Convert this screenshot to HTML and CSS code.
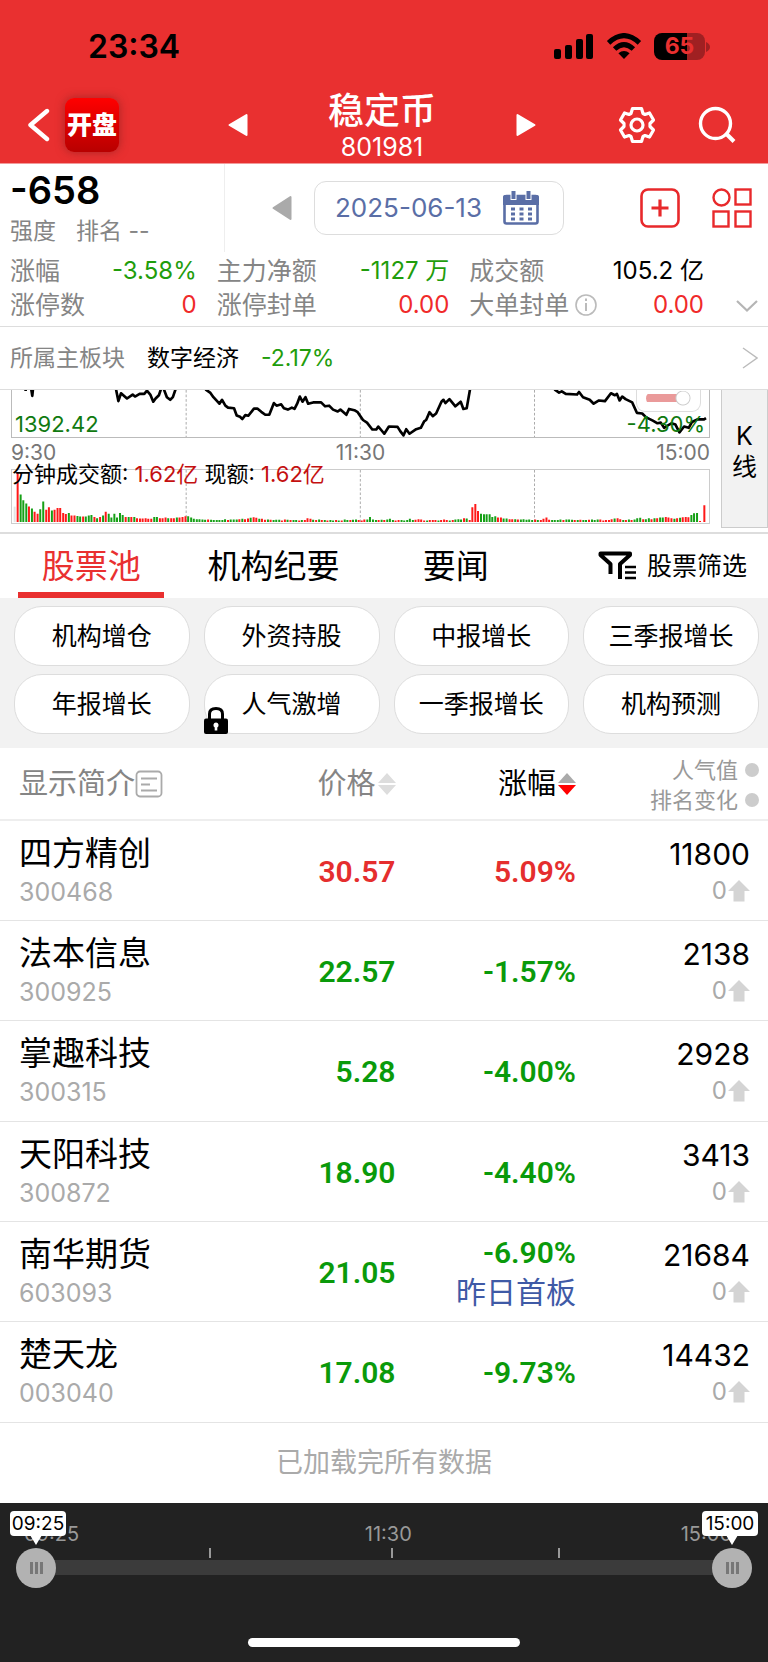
FILE: index.html
```html
<!DOCTYPE html>
<html lang="zh-CN">
<head>
<meta charset="utf-8">
<meta name="viewport" content="width=device-width, initial-scale=1">
<title>稳定币 801981</title>
<link rel="stylesheet" href="styles.css">
</head>
<body>
<header class="top">
  <div class="status">
    <span class="clock">23:34</span>
    <div class="status-icons">
      <svg width="40" height="27" viewBox="0 0 40 27" aria-hidden="true"><rect x="0" y="16" width="7" height="10" rx="2"/><rect x="11" y="12" width="7" height="14" rx="2"/><rect x="22" y="6" width="7" height="20" rx="2"/><rect x="32" y="1" width="7" height="25" rx="2"/></svg>
      <svg width="36" height="27" viewBox="0 0 36 27" aria-hidden="true"><g fill="none" stroke="#000" stroke-width="5"><path d="M2.6 9.8Q18 -4.600 33.400 9.800"/><path d="M8.600 16Q18 7.200 27.400 16"/></g><path d="M18 26L12.400 20.300Q18 15.600 23.600 20.300Z"/></svg>
      <div class="battery"><span class="battery-body">65</span><svg width="4" height="10" viewBox="0 0 4 10" aria-hidden="true"><path d="M0 0Q4 2 4 5T0 10Z" fill="#a02022"/></svg></div>
    </div>
  </div>
  <nav class="nav">
    <div class="nav-left">
      <button class="icon-btn" aria-label="返回"><svg width="22" height="34" viewBox="0 0 22 34"><path d="M19 3L2.500 17L19 31" fill="none" stroke="#fff" stroke-width="4.400" stroke-linecap="round" stroke-linejoin="round"/></svg></button>
      <a class="logo" href="#">开盘</a>
    </div>
    <div class="nav-title">
      <button class="icon-btn" aria-label="上一个"><svg width="20" height="24" viewBox="0 0 20 24"><path d="M1.500 12L18.500 2V22Z" fill="#fff" stroke="#fff" stroke-width="2" stroke-linejoin="round"/></svg></button>
      <div class="title-text"><h1>稳定币</h1><span>801981</span></div>
      <button class="icon-btn" aria-label="下一个"><svg width="20" height="24" viewBox="0 0 20 24"><path d="M18.500 12L1.500 2V22Z" fill="#fff" stroke="#fff" stroke-width="2" stroke-linejoin="round"/></svg></button>
    </div>
    <div class="nav-right">
      <button class="icon-btn" aria-label="设置"><svg width="38" height="38" viewBox="0 0 38 38" fill="none" stroke="#fff" stroke-width="3.200" stroke-linejoin="round"><path d="M14.500 2.500H23.500L25 7.500L27 8.500L31.500 7L35.500 14L32 17.500V20.500L35.500 24L31.500 31L27 29.500L25 30.500L23.500 35.500H14.500L13 30.500L11 29.500L6.500 31L2.500 24L6 20.500V17.500L2.500 14L6.500 7L11 8.500L13 7.500Z"/><circle cx="19" cy="19" r="6"/></svg></button>
      <button class="icon-btn" aria-label="搜索"><svg width="38" height="38" viewBox="0 0 38 38" fill="none" stroke="#fff" stroke-width="3.400"><circle cx="17.500" cy="17.500" r="15"/><path d="M27.500 27L36 35.500" stroke-width="4"/></svg></button>
    </div>
  </nav>
</header>

<main>
  <section class="summary">
    <div class="strength">
      <strong>-658</strong>
      <p><span>强度</span><span>排名 --</span></p>
    </div>
    <div class="date-row">
      <button class="icon-btn" aria-label="前一天"><svg width="20" height="26" viewBox="0 0 20 26"><path d="M1.500 13L18.500 2V24Z" fill="#aaa" stroke="#aaa" stroke-width="2" stroke-linejoin="round"/></svg></button>
      <button class="date-btn">2025-06-13
        <svg width="36" height="34" viewBox="0 0 36 34" aria-hidden="true"><rect x="1.500" y="5" width="33" height="27.500" rx="2" fill="#fff" stroke="#5a6ea6" stroke-width="2.600"/><path d="M0 14V6Q0 4 2 4H34Q36 4 36 6V14Z" fill="#5a6ea6"/><g stroke="#fff" stroke-width="6"><path d="M10.500 0V9M25.500 0V9"/></g><g stroke="#5a6ea6" stroke-width="4"><path d="M10.500 0V8M25.500 0V8"/><path d="M8 18H29M8 23H29M8 28H29" stroke-width="3" stroke-dasharray="4 4.500"/></g></svg>
      </button>
      <div class="actions">
        <button class="icon-btn" aria-label="添加"><svg width="40" height="40" viewBox="0 0 40 40" fill="none" stroke="#e8292b"><rect x="1.500" y="1.500" width="37" height="37" rx="6.500" stroke-width="2.600"/><path d="M11.500 20H28.500M20 11.500V28.500" stroke-width="3.200"/></svg></button>
        <button class="icon-btn" aria-label="分类"><svg width="40" height="40" viewBox="0 0 40 40" fill="none" stroke="#e8292b" stroke-width="2.400"><circle cx="9.500" cy="9.500" r="8"/><rect x="23.500" y="1.500" width="15" height="15"/><rect x="1.500" y="23.500" width="15" height="15"/><rect x="23.500" y="23.500" width="15" height="15"/></svg></button>
      </div>
    </div>
  </section>

  <section class="stats">
    <dl>
      <div><dt>涨幅</dt><dd class="down">-3.58%</dd></div>
      <div><dt>主力净额</dt><dd class="down">-1127 万</dd></div>
      <div><dt>成交额</dt><dd>105.2 亿</dd></div>
      <div><dt>涨停数</dt><dd class="up">0</dd></div>
      <div><dt>涨停封单</dt><dd class="up">0.00</dd></div>
      <div><dt>大单封单<svg width="24" height="24" viewBox="0 0 24 24" fill="none" stroke="#bbb" aria-hidden="true"><circle cx="12" cy="12" r="10" stroke-width="1.600"/><path d="M12 10V18M12 5.500V8" stroke-width="2"/></svg></dt><dd class="up">0.00</dd></div>
    </dl>
    <button class="icon-btn" aria-label="展开"><svg width="22" height="34" viewBox="0 0 22 34"><path d="M1 13L11 22.500L21 13" fill="none" stroke="#b5b5b5" stroke-width="2.200"/></svg></button>
  </section>

  <a class="sector" href="#">
    <span class="muted">所属主板块</span><span>数字经济</span><span class="down">-2.17%</span>
    <svg width="16" height="22" viewBox="0 0 16 22" aria-hidden="true"><path d="M1 1L15 11L1 21" fill="none" stroke="#bbb" stroke-width="1.400"/></svg>
  </a>

  <section class="charts">
    <div class="chart-col">
      <div class="price">
        <svg class="plot" viewBox="34 28 2097 144" preserveAspectRatio="none" aria-hidden="true">
          <g class="grid"><path d="M558 28V172M1082 28V172M1606 28V172"/></g>
          <g class="line">
            <path d="M75 25V31M92 26L95 46L97 26"/>
            <path d="M347 26L354 62L362 38L380 54L397 42L404 48L418 40L432 40L440 30L450 42L459 64L466 54L476 44L482 26"/>
            <path d="M491 26L500 50L510 58L518 50L526 26"/>
            <path d="M616 26L630 36L640 50L658 70L666 58L676 76L684 82L702 84L710 106L720 110L727 117L736 105L745 107L762 85L772 85L784 95L796 104L808 104L822 68L830 76L844 72L852 84L864 88L876 82L884 86L892 70L900 48L908 64L917 50L925 70L940 66L964 66L976 78L988 76L1000 88L1014 94L1022 88L1040 104L1048 86L1064 90L1074 96L1090 120L1102 128L1118 149L1130 149L1136 140L1146 152L1154 162L1168 140L1194 141L1202 154L1212 167L1220 148L1230 162L1250 148L1264 144L1274 124L1280 120L1290 96L1300 108L1310 100L1326 64L1332 58L1338 68L1350 56L1368 78L1384 64L1392 86L1402 84L1412 26"/>
            <path d="M1666 26L1680 36L1688 32L1700 40L1734 42L1740 34L1752 50L1772 58L1784 70L1800 60L1818 62L1836 38L1848 44L1854 40L1862 60L1870 48L1880 56L1900 66L1914 98L1930 100L1942 112L1962 122L1976 130L1986 128L1996 144L2008 136L2018 130L2030 134L2042 158L2056 140L2070 144L2080 126L2096 118L2116 118L2122 114"/>
          </g>
        </svg>
        <span class="low">1392.42</span><span class="low low-pct">-4.30%</span>
        <label class="toggle"><input type="checkbox" checked aria-label="叠加"></label>
      </div>
      <div class="axis"><span>9:30</span><span>11:30</span><span>15:00</span></div>
      <div class="volume">
        <svg class="plot" viewBox="34 266 2097 165" preserveAspectRatio="none" aria-hidden="true">
          <g class="grid"><path d="M558 266V431M1082 266V431M1606 266V431"/></g>
          <path d="M42 428V380" stroke="#e4e4e4" stroke-width="6"/>
          <path id="vol-up" stroke="#ff1818" stroke-width="6"/>
          <path id="vol-down" stroke="#16a016" stroke-width="6"/>
        </svg>
        <p class="legend">分钟成交额: <b>1.62亿</b> 现额: <b>1.62亿</b></p>
      </div>
    </div>
    <button class="kline">K<br>线</button>
  </section>

  <nav class="tabs">
    <button class="tab active">股票池</button>
    <button class="tab">机构纪要</button>
    <button class="tab">要闻</button>
    <button class="filter"><svg width="38" height="30" viewBox="0 0 38 30" fill="none" stroke="#000" aria-hidden="true"><path d="M12.500 23V13L2.500 4V2.500H32V4L22 13V28" stroke-width="4" stroke-linejoin="round"/><path d="M27 16H38M27 21.500H38M27 27H38" stroke-width="2.600"/></svg>股票筛选</button>
  </nav>

  <section class="chips">
    <button>机构增仓</button><button>外资持股</button><button>中报增长</button><button>三季报增长</button>
    <button>年报增长</button><button>人气激增<svg class="lock" width="24" height="27" viewBox="0 0 24 27" aria-hidden="true"><path d="M5.500 13V7Q5.500 1.500 12 1.500T18.500 7V13" fill="none" stroke="#000" stroke-width="3"/><rect y="11.500" width="24" height="15.500" rx="2"/><path d="M12 15.500a2.700 2.700 0 0 1 1.300 5V23.500H10.700V20.500A2.700 2.700 0 0 1 12 15.500Z" fill="#fff"/></svg></button><button>一季报增长</button><button>机构预测</button>
  </section>

  <table class="stocks">
    <colgroup><col class="c-name"><col class="c-price"><col class="c-pct"><col></colgroup>
    <thead>
      <tr>
        <th><button class="head-btn">显示简介<svg width="28" height="28" viewBox="0 0 28 28" fill="none" stroke="#aaa" aria-hidden="true"><rect x="1.500" y="1.500" width="25" height="25" rx="3.500" stroke-width="1.800"/><path d="M6 8.500H22M6 14.500H15M6 20.500H22" stroke-width="1.800"/></svg></button></th>
        <th><button class="head-btn">价格<svg width="18" height="22" viewBox="0 0 18 22" aria-hidden="true"><path d="M9 0L18 10H0ZM9 22L18 12H0Z" fill="#ddd"/></svg></button></th>
        <th><button class="head-btn sorted">涨幅<svg width="18" height="22" viewBox="0 0 18 22" aria-hidden="true"><path d="M9 0L18 10H0Z" fill="#aaa"/><path d="M9 22L18 12H0Z" fill="#f00"/></svg></button></th>
        <th class="pop-head"><button>人气值<i></i></button><button>排名变化<i></i></button></th>
      </tr>
    </thead>
    <tbody id="rows"></tbody>
  </table>
  <p class="end">已加载完所有数据</p>
</main>

<footer class="timeline">
  <div class="marks"><span>09:25</span><span>11:30</span><span>15:00</span></div>
  <div class="ticks"><i></i><i></i><i></i></div>
  <div class="range">
    <input type="range" min="0" max="240" value="0" aria-label="开始时间">
    <input type="range" min="0" max="240" value="240" aria-label="结束时间">
  </div>
  <output class="tip tip-start">09:25</output>
  <output class="tip tip-end">15:00</output>
  <div class="home"></div>
</footer>
<script src="main.js"></script>
</body>
</html>
```
FILE: styles.css
```css
* { box-sizing: border-box; }
body {
  margin: 0;
  background: #fff;
  color: #000;
  font-family: Inter, "Noto Sans CJK SC", sans-serif;
  font-size: 24px;
  line-height: 34px;
}
h1, p, dl, dd { margin: 0; }
button {
  font: inherit;
  color: inherit;
  background: none;
  border: 0;
  padding: 0;
  cursor: pointer;
}
a { color: inherit; text-decoration: none; }
svg { display: block; flex: none; }
.icon-btn { display: flex; }
.muted { color: #858585; }
.up { color: #f02a2a; }
.down { color: #1f9d0c; }

/* header */
.top { background: #e93030; border-bottom: 1px solid #f29a9a; }
.status {
  display: flex;
  align-items: center;
  justify-content: space-between;
  height: 87px;
  padding: 6px 58px 0 88px;
}
.clock { font-size: 32px; font-weight: 600; }
.status-icons { display: flex; align-items: center; gap: 12px; }
.battery { display: flex; align-items: center; gap: 1px; }
.battery-body {
  width: 51px;
  height: 27px;
  border-radius: 8px;
  background: linear-gradient(90deg, #000 65%, #a02022 65%);
  color: #e93030;
  font-size: 23px;
  font-weight: 700;
  line-height: 27px;
  text-align: center;
}
.nav { display: flex; align-items: center; height: 76px; color: #fff; }
.nav-left { display: flex; flex: 1; align-items: center; gap: 15px; padding-left: 28px; }
.logo {
  width: 54px;
  height: 54px;
  border-radius: 9px;
  background: linear-gradient(#f00, #b80000);
  box-shadow: 0 0 10px rgba(120, 30, 30, .6);
  font-size: 25px;
  font-weight: 900;
  line-height: 54px;
  text-align: center;
}
.nav-title { display: flex; width: 40%; align-items: center; justify-content: space-between; }
.title-text { display: flex; flex-direction: column; align-items: center; gap: 4px; font-size: 25px; line-height: 24px; }
.title-text h1 { font-size: 36px; font-weight: 500; line-height: 40px; }
.nav-right { display: flex; flex: 1; justify-content: flex-end; gap: 42px; padding-right: 32px; }

/* summary */
.summary { display: flex; height: 88px; }
.strength { width: 225px; padding: 8px 0 0 10px; border-right: 1px solid #eee; }
.strength strong { display: block; font-size: 38px; font-weight: 600; line-height: 36px; }
.strength p { display: flex; gap: 20px; margin-top: 6px; color: #858585; font-size: 23px; }
.date-row { display: flex; flex: 1; align-items: center; gap: 22px; padding: 0 16px 0 47px; }
.date-btn {
  display: flex;
  align-items: center;
  justify-content: space-between;
  width: 250px;
  height: 54px;
  padding: 0 24px 0 20px;
  border: 1px solid #ddd;
  border-radius: 12px;
  color: #5a6ea6;
  font-size: 26px;
}
.actions { display: flex; flex: 1; justify-content: flex-end; gap: 32px; }
.stats {
  display: flex;
  align-items: flex-end;
  gap: 32px;
  padding: 2px 10px 4px;
  border-bottom: 1px solid #ddd;
}
.stats dl { display: grid; flex: 1; grid-template-columns: 187fr 233fr 235fr; column-gap: 20px; }
.stats dl div { display: flex; justify-content: space-between; }
.stats dt { display: flex; align-items: center; gap: 5px; color: #858585; font-size: 25px; }
.sector {
  display: flex;
  align-items: center;
  gap: 22px;
  height: 62px;
  padding: 0 10px;
  font-size: 23px;
}
.sector svg { margin-left: auto; }

/* charts */
.charts {
  display: flex;
  gap: 11px;
  padding-left: 11px;
  border-top: 1px solid #ddd;
  border-bottom: 2px solid #ddd;
}
.chart-col { flex: 1; padding-bottom: 8px; }
.plot { width: 100%; height: 100%; }
.grid { fill: none; stroke: #aaa; stroke-width: 3; stroke-dasharray: 8 6; }
.line { fill: none; stroke: #000; stroke-width: 8; stroke-linejoin: round; }
.price { position: relative; height: 48px; border: solid #bbb; border-width: 0 1px 1px; }
.low { position: absolute; bottom: 0; left: 3px; color: #107a10; font-size: 22px; line-height: 26px; }
.low-pct { right: 4px; left: auto; }
.toggle {
  position: absolute;
  top: 0;
  right: 8px;
  display: flex;
  padding: 1px 9px 5px;
  border: solid #ddd;
  border-width: 0 1px 1px;
  border-radius: 0 0 9px 9px;
  background: rgba(255, 255, 255, .7);
}
.toggle input {
  appearance: none;
  width: 45px;
  height: 15px;
  margin: 0;
  background:
    radial-gradient(circle at 37px 7px, #fff 6px, #ccc 7px, transparent 8px),
    linear-gradient(#ea9a9a, #ea9a9a) 0 3px / 38px 8px no-repeat;
  border-radius: 8px;
}
.axis { display: grid; grid-template-columns: 1fr auto 1fr; height: 31px; color: #777; font-size: 21px; line-height: 30px; }
.axis span:last-child { text-align: right; }
.volume { position: relative; height: 55px; border: 1px solid #ccc; }
.legend { position: absolute; top: -11px; left: 0; font-size: 22px; line-height: 30px; white-space: nowrap; }
.legend b { color: #c41010; font-weight: 400; }
.kline {
  width: 47px;
  margin-bottom: 4px;
  padding-bottom: 14px;
  background: #f2f2f2;
  border: 1px solid #ccc;
  border-top: 0;
  font-size: 25px;
  line-height: 31px;
}

/* tabs */
.tabs { display: flex; height: 64px; padding-right: 21px; }
.tab { position: relative; flex: 1; font-size: 33px; }
.tab.active { color: #e93030; }
.tab.active::after {
  content: "";
  position: absolute;
  right: 18px;
  bottom: 0;
  left: 18px;
  height: 6px;
  background: #e93030;
}
.filter { display: flex; flex: 0 0 200px; align-items: center; justify-content: flex-end; gap: 11px; font-size: 25px; white-space: nowrap; }
.chips {
  display: grid;
  grid-template-columns: repeat(4, 1fr);
  gap: 8px 14px;
  padding: 8px 9px 14px 14px;
  background: #f2f2f2;
}
.chips button {
  position: relative;
  height: 60px;
  background: #fff;
  border: 1px solid #ddd;
  border-radius: 28px;
  font-size: 25px;
}
.lock { position: absolute; bottom: -1px; left: -1px; }

/* stock table */
.stocks { width: 100%; border-collapse: collapse; table-layout: fixed; }
.c-name { width: 29.5%; }
.c-price { width: 22%; }
.c-pct { width: 23.5%; }
.stocks th, .stocks td { padding: 0; text-align: right; font-weight: 400; }
.stocks th:first-child, .stocks td:first-child { padding-left: 19px; text-align: left; }
.stocks th { height: 72px; border-bottom: 2px solid #eee; }
.head-btn { display: inline-flex; align-items: center; gap: 2px; color: #858585; font-size: 29px; vertical-align: middle; }
.head-btn.sorted { color: #000; }
.stocks th:first-child .head-btn { gap: 0; white-space: nowrap; }
.stocks .pop-head { padding: 3px 9px 0 0; }
.pop-head button { display: flex; align-items: center; gap: 7px; margin-left: auto; color: #999; font-size: 22px; line-height: 30px; }
.pop-head i { width: 14px; height: 14px; border-radius: 50%; background: #ccc; }
.stocks td { height: 100px; padding-top: 3px; border-bottom: 1px solid #e4e4e4; }
.stocks tbody tr:nth-child(3n) td { height: 101px; }
.stocks td:last-child { padding-right: 18px; }
.name { display: block; font-size: 33px; line-height: 40px; }
.code { display: block; color: #aaa; font-size: 25px; line-height: 38px; }
.num { display: block; font-family: Roboto, sans-serif; font-size: 30px; font-weight: 600; line-height: 38px; }
.num.up { color: #e52e2e; }
.num.down { color: #0a9a0a; }
.tag { display: block; color: #3f5aa6; font-size: 30px; line-height: 40px; }
.pop { display: block; font-size: 30px; line-height: 38px; }
.rank { display: flex; align-items: center; justify-content: flex-end; gap: 1px; color: #aaa; line-height: 36px; }
.end { padding: 20px 0 21px; color: #aaa; font-size: 27px; line-height: 39px; text-align: center; }

/* timeline */
.timeline { position: relative; padding: 17px 16px 15px; background: #222; }
.marks { display: grid; grid-template-columns: 342fr 317fr 49fr; padding: 0 20px 0 8px; color: #999; font-size: 20px; line-height: 28px; white-space: nowrap; }
.ticks { display: grid; grid-template-columns: 181fr 167fr 2fr; padding: 0 192px 0 193px; }
.ticks i { width: 2px; height: 10px; background: #999; }
.range { display: grid; height: 20px; align-items: center; }
.range input {
  grid-area: 1 / 1;
  appearance: none;
  width: 100%;
  height: 15px;
  margin: 0;
  background: #3b3b3b;
  border-radius: 8px;
  pointer-events: none;
}
.range input + input { background: none; }
.range input::-webkit-slider-thumb {
  appearance: none;
  width: 40px;
  height: 40px;
  border-radius: 50%;
  background:
    linear-gradient(90deg, #777 3px, transparent 3px 5px, #777 5px 8px, transparent 8px 10px, #777 10px) center / 13px 12px no-repeat,
    #b2b2b2;
  pointer-events: auto;
}
.tip {
  position: absolute;
  top: 8px;
  width: 56px;
  border-radius: 4px;
  background: #fff;
  font-size: 19px;
  line-height: 25px;
  text-align: center;
}
.tip::after {
  content: "";
  position: absolute;
  top: 24px;
  left: 20px;
  border: solid transparent;
  border-width: 10px 6px 0;
  border-top-color: #fff;
}
.tip-start { left: 10px; }
.tip-end { right: 10px; }
.tip-end::after { left: 24px; }
.home { width: 37%; height: 9px; margin: 60px auto 0; border-radius: 5px; background: #fff; }
```
FILE: main.js
```js
// One entry per minute after the opening auction: R = rising, G = falling, number = bar height.
const bars = ("R156 G86 G68 G58 R48 G42 R32 R26 G40 G64 R38 R46 G36 R38 R44 R44 R28 R25 G28 R20 R20 G19 G17 R17 G17 G20 G22 R16 G12 R16 G20 R32 G26 G14 G26 G14 G28 " +
  "G22 R16 G16 R16 G16 R12 R11 R11 R12 R10 R10 G16 G16 R12 R12 R14 G12 R12 R12 G14 R14 R16 R18 G18 G14 G10 G9 G9 G8 G7 R8 G7 G6 G6 G6 G6 G9 R6 G8 G8 G8 R9 G10 R9 R11 G13 R15 R13 G10 R10 R7 G8 R7 G6 G7 G7 R5 R8 " +
  "G7 R6 G6 G6 R5 G6 R6 R12 R10 G7 R6 G8 R6 G6 R5 G6 G5 R6 G5 R5 G8 G6 R6 G7 G8 R6 R5 R8 G8 G16 G8 G6 R6 G7 R6 G8 " +
  "G10 G6 R5 R6 G6 G5 G6 G10 G6 R7 R9 R8 R5 G5 R6 R6 R6 G5 R6 R8 R6 G5 R6 G8 G9 G8 R12 G11 R6 R46 R56 R34 G26 G24 G24 G24 G16 G18 R14 R14 G11 G11 R9 R9 G9 R8 G8 G9 G7 G8 G6 R8 G6 R6 " +
  "R10 R14 R7 G6 G6 G6 G8 R6 G8 G8 G7 R6 G6 R7 G6 G6 R7 G8 G6 G8 R8 R5 R6 R6 R9 G11 R12 R9 G6 R6 G8 R6 G8 G12 G13 R9 G9 G12 R9 G12 R12 G14 G14 R16 R14 R12 G10 R12 G13 R15 R16 R15 G22 G27 G28 R3").split(" ");
const paths = { R: "", G: "" };
bars.forEach((bar, i) => {
  paths[bar[0]] += `M${51 + Math.round(i * 2044 / (bars.length - 2))} 428v-${bar.slice(1)}`;
});
document.getElementById("vol-up").setAttribute("d", paths.R + "M2117 428v-52");
document.getElementById("vol-down").setAttribute("d", paths.G);

const stocks = [
  ["四方精创", "300468", "30.57", "5.09%", "11800"],
  ["法本信息", "300925", "22.57", "-1.57%", "2138"],
  ["掌趣科技", "300315", "5.28", "-4.00%", "2928"],
  ["天阳科技", "300872", "18.90", "-4.40%", "3413"],
  ["南华期货", "603093", "21.05", "-6.90%", "21684", "昨日首板"],
  ["楚天龙", "003040", "17.08", "-9.73%", "14432"]
];
const arrow = '<svg width="22" height="22" viewBox="0 0 22 22" aria-hidden="true"><path d="M11 0L22 11H16.500V21.500H5.500V11H0Z" fill="#d4d4d4"/></svg>';
document.getElementById("rows").innerHTML = stocks.map(([name, code, price, pct, pop, tag]) => {
  const dir = pct[0] === "-" ? "down" : "up";
  return `<tr>
    <td><span class="name">${name}</span><span class="code">${code}</span></td>
    <td><span class="num ${dir}">${price}</span></td>
    <td><span class="num ${dir}">${pct}</span>${tag ? `<span class="tag">${tag}</span>` : ""}</td>
    <td><span class="pop">${pop}</span><span class="rank">0${arrow}</span></td>
  </tr>`;
}).join("");
```
